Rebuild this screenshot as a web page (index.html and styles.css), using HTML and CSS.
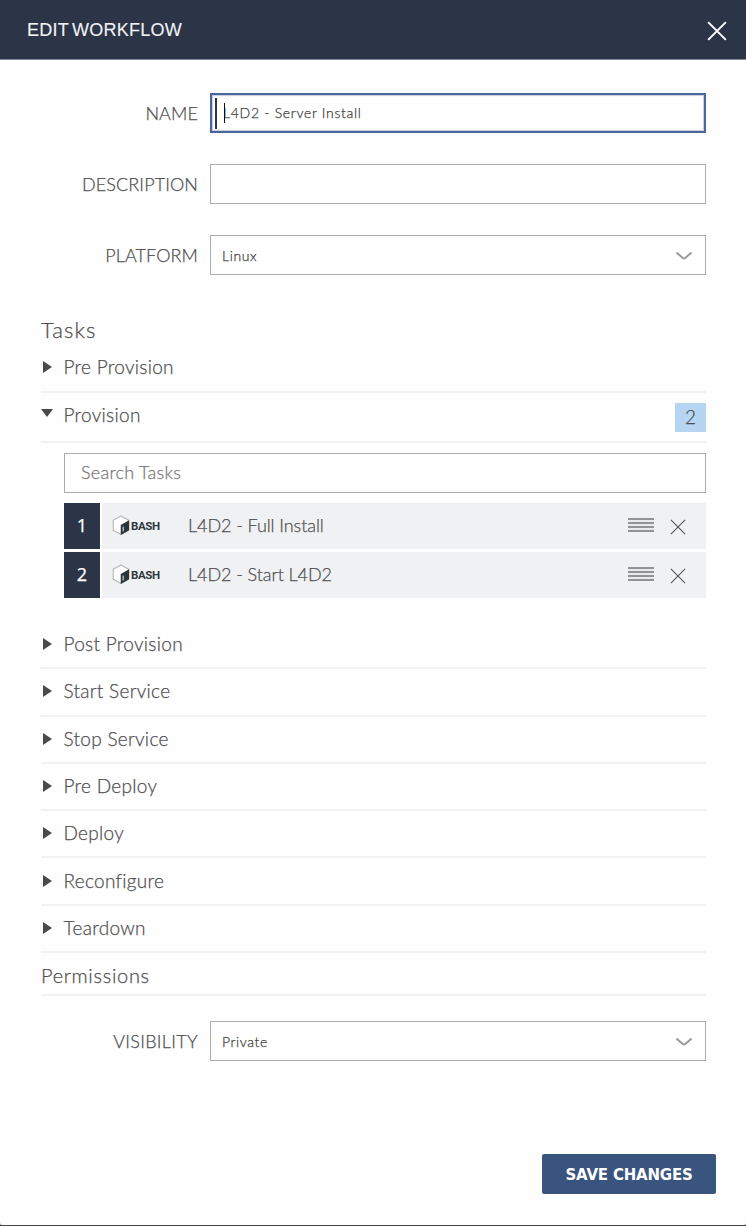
FILE: index.html
```
<!DOCTYPE html>
<html lang="en">
<head>
<meta charset="utf-8">
<title>Edit Workflow</title>
<link rel="stylesheet" href="styles.css">
</head>
<body>
<svg class="defs" width="0" height="0" aria-hidden="true">
  <symbol id="chevron" viewBox="0 0 18 10"><path d="M1.5 1.5L7.8 7Q9 8 10.2 7L16.5 1.5" fill="none" stroke="#999" stroke-width="2"/></symbol>
  <symbol id="cross" viewBox="0 0 18 18"><path d="M1 1L17 17M17 1L1 17" fill="none" stroke="currentColor"/></symbol>
  <symbol id="cube" viewBox="0 0 20 22">
    <path d="M9.5 1L17.5 5.5V16L9.5 20.5L1.3 16V5.5Z" fill="#fff" stroke="#b5b8ba" stroke-width="1.2" stroke-linejoin="round"/>
    <path d="M9.2 10.5L18 5.5V16L9.2 21Z" fill="#2b3539"/>
    <path d="M12.5 12.5q-1.8 1 -.6 2t-.7 2.3M11.7 12v5.5" fill="none" stroke="#e5e7e8" stroke-width=".7"/>
  </symbol>
</svg>
<div class="modal">
  <header class="head">
    <h1 class="title">EDIT WORKFLOW</h1>
    <svg class="close"><use href="#cross"/></svg>
  </header>
  <main class="body">
    <div class="field"><label class="label">NAME</label><div class="input focus"><i class="bar"></i><i class="caret"></i><span class="value wide">L4D2 - Server Install</span></div></div>
    <div class="field"><label class="label">DESCRIPTION</label><div class="input"></div></div>
    <div class="field"><label class="label">PLATFORM</label><div class="input"><span class="value">Linux</span><svg class="chev"><use href="#chevron"/></svg></div></div>
    <h2 class="heading">Tasks</h2>
    <div class="phase first"><i class="tri"></i><span>Pre Provision</span></div>
    <div class="phase open"><i class="tri down"></i><span>Provision</span><b class="count">2</b></div>
    <div class="tasks">
      <div class="search"><span>Search Tasks</span></div>
      <div class="task"><b class="num">1</b><div class="card"><svg class="cube"><use href="#cube"/></svg><span class="bash">BASH</span><span class="tname">L4D2 - Full Install</span><i class="grip"></i><svg class="remove"><use href="#cross"/></svg></div></div>
      <div class="task"><b class="num">2</b><div class="card"><svg class="cube"><use href="#cube"/></svg><span class="bash">BASH</span><span class="tname">L4D2 - Start L4D2</span><i class="grip"></i><svg class="remove"><use href="#cross"/></svg></div></div>
    </div>
    <div class="phase"><i class="tri"></i><span>Post Provision</span></div>
    <div class="phase"><i class="tri"></i><span>Start Service</span></div>
    <div class="phase"><i class="tri"></i><span>Stop Service</span></div>
    <div class="phase"><i class="tri"></i><span>Pre Deploy</span></div>
    <div class="phase"><i class="tri"></i><span>Deploy</span></div>
    <div class="phase"><i class="tri"></i><span>Reconfigure</span></div>
    <div class="phase"><i class="tri"></i><span>Teardown</span></div>
    <h2 class="perm">Permissions</h2>
    <div class="field"><label class="label spaced">VISIBILITY</label><div class="input"><span class="value">Private</span><svg class="chev"><use href="#chevron"/></svg></div></div>
  </main>
  <footer class="foot"><button class="save">SAVE CHANGES</button></footer>
</div>
</body>
</html>
```
FILE: styles.css
```
* { box-sizing: border-box; }
body { margin: 0; background: #444; font-family: Lato, "Open Sans", sans-serif; font-weight: 300; color: #505050; -webkit-text-stroke: .25px; }
.defs { position: absolute; }
.modal { height: 1225px; background: #fefefe; border-radius: 0 0 3px 3px; display: flex; flex-direction: column; box-shadow: 0 1px #ccc; }
.head { height: 60px; background: #2c3548; border-bottom: 1px solid #858b97; display: flex; align-items: center; justify-content: space-between; padding: 1px 19px 0 27px; }
.title { margin: 0; color: #f1f2f4; font: 400 18px/24px "Liberation Sans", sans-serif; letter-spacing: .25px; word-spacing: -2px; -webkit-text-stroke: .1px #f1f2f4; }
.close { width: 20px; height: 20px; color: #fff; stroke-width: 1.8; margin-top: 1px; }
.body { padding: 33px 40px 0 41px; flex: 1; }
.field { display: flex; height: 40px; margin-bottom: 31.2px; align-items: center; }
.label { width: 157px; margin-right: 12px; padding-bottom: 1px; text-align: right; font-size: 18px; letter-spacing: .1px; }
.spaced { letter-spacing: .3px; }
.input { position: relative; flex: 1; height: 40px; border: 1px solid #adadad; background: #fff; display: flex; align-items: center; padding-left: 11px; font-size: 14px; color: #333; }
.focus { border: 2px solid #4a659a; box-shadow: inset 0 0 1px 1px #c5cddd; padding-left: 11px; }
.bar { position: absolute; left: 3px; top: 3px; width: 2px; height: 31px; background: #2c3548; }
.caret { position: absolute; left: 12px; top: 8px; width: 1px; height: 20px; background: #111; }
.value { letter-spacing: .6px; color: #404040; }
.wide { letter-spacing: .7px; padding-bottom: 1px; }
.chev { width: 18px; height: 10px; margin: 1px 12px 0 auto; }
.heading { margin: 39.6px 0 0; font-size: 22px; line-height: 30px; font-weight: 300; letter-spacing: 1.1px; }
.phase { height: 47.3px; display: flex; align-items: center; font-size: 19px; border-bottom: 2px solid #f2f2f2; letter-spacing: .3px; }
.phase span { padding-bottom: 2px; }
.first { height: 48px; }
.open { height: 50px; }
.open span { padding-bottom: 4px; }
.tri { width: 0; height: 0; border: 6.5px solid transparent; border-left: 9px solid #4a4a4a; border-right: 0; margin: -1px 11.5px 0 2px; }
.down { border: 6px solid transparent; border-top: 8.5px solid #4a4a4a; border-bottom: 0; margin: -8px 10.5px 0 0; }
.count { margin: 1px 0 0 auto; width: 31px; height: 29px; background: #b5d5f3; font-weight: 300; font-size: 19px; line-height: 28px; text-align: center; letter-spacing: 0; }
.tasks { padding: 10px 0 21px 23px; }
.search { height: 40px; border: 1px solid #adadad; display: flex; align-items: center; padding: 0 0 2px 16px; font-size: 18px; color: #777; letter-spacing: .25px; margin-bottom: 10px; background: #fff; }
.task { display: flex; gap: 2px; height: 46px; margin-bottom: 3px; }
.num { width: 36px; background: #2c3548; color: #fff; font: 400 18px/45px "Open Sans", sans-serif; text-align: center; }
.card { flex: 1; background: #eff1f3; display: flex; align-items: center; padding: 0 20px 0 10px; }
.cube { width: 19px; height: 21px; }
.bash { width: 57px; font: 700 11.5px Roboto, sans-serif; letter-spacing: -.4px; color: #2e373b; -webkit-text-stroke: 0; }
.tname { font-size: 18px; padding-bottom: 1px; letter-spacing: -.08px; }
.grip { margin: -1px 16px 0 auto; width: 26px; height: 14px; background: repeating-linear-gradient(#929494 0 2px, #e8eaeb 2px 4px); }
.remove { width: 16px; height: 16px; margin-top: 3px; color: #555; stroke-width: 1.2; }
.perm { margin: 0 0 25px; height: 43px; border-bottom: 2px solid #f2f2f2; font-size: 20px; line-height: 44px; font-weight: 300; letter-spacing: .7px; }
.foot { padding: 0 30px 31px; display: flex; justify-content: flex-end; }
.save { width: 174px; height: 40px; border: 0; border-radius: 2px; background: #3a5480; color: #fff; font: 700 15px "DejaVu Sans", sans-serif; letter-spacing: -.2px; padding: 1px 0 0; -webkit-text-stroke: 0; }
```
